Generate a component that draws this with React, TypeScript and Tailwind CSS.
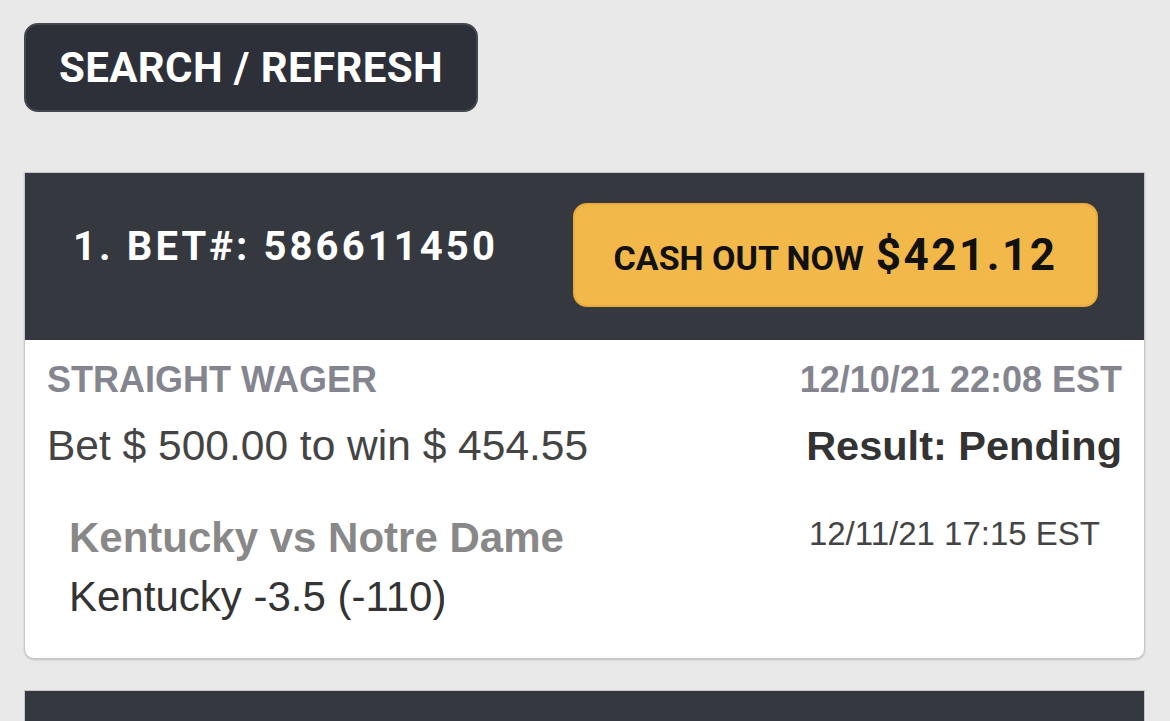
import React from 'react';

const head = "font-['Roboto',_'Liberation_Sans',_sans-serif] font-bold uppercase";
const body = "font-['Liberation_Sans',_Arial,_sans-serif]";

const BetCard: React.FC<{ index: number; bet: string; cashOut: string }> = ({ index, bet, cashOut }) => (
  <div className="ml-[24px] w-[1121px] border border-[#c6c6c6] rounded-b-[10px] shadow-[0_1px_2px_rgba(0,0,0,0.18)] bg-white overflow-hidden">
    <div className="h-[167px] bg-[#363840] flex items-center justify-between pl-[48px] pr-[46px]">
      <h3 className={`${head} text-white text-[40px] leading-none tracking-[3.1px] -mt-[20px]`}>
        {index}. Bet#: {bet}
      </h3>
      <button className="w-[525px] h-[104px] -mt-[3px] rounded-[14px] bg-[#f2b84a] border-2 border-[#eaab3d] flex items-center justify-center gap-[12px] text-[#111]">
        <span className={`${head} text-[34px] leading-none mt-[6px]`}>Cash out now</span>
        <span className={`${head} text-[44px] leading-none tracking-[2.5px]`}>${cashOut}</span>
      </button>
    </div>
    <div className={`${body} pt-[20px] pb-[37px] pl-[22px] pr-[22px]`}>
      <div className="flex justify-between items-start text-[36px] leading-[40px] font-bold text-[#85858f]">
        <span>STRAIGHT WAGER</span>
        <span>12/10/21 22:08 EST</span>
      </div>
      <div className="flex justify-between items-start mt-[22px] leading-[48px]">
        <span className="text-[42.5px] text-[#444]">Bet $ 500.00 to win $ 454.55</span>
        <span className="text-[41.5px] font-bold text-[#333]">Result: Pending</span>
      </div>
      <div className="mt-[44px] px-[22px] flex justify-between items-start">
        <div className="flex flex-col gap-[11px]">
          <span className="text-[42px] leading-[48px] font-bold text-[#888]">Kentucky vs Notre Dame</span>
          <span className="text-[42px] leading-[48px] text-[#333]">Kentucky -3.5 (-110)</span>
        </div>
        <span className="text-[33px] leading-[38px] text-[#444] mt-[1px]">12/11/21 17:15 EST</span>
      </div>
    </div>
  </div>
);

export default function App() {
  return (
    <div className="min-h-screen bg-[#e9e9e9] pt-[23px]">
      <button className={`${head} ml-[24px] w-[454px] h-[89px] rounded-[14px] bg-[#2e3039] border-2 border-[#45474f] text-white text-[42px] leading-none tracking-[0.4px] flex items-center justify-center`}>
        Search / Refresh
      </button>
      <div className="mt-[60px] flex flex-col gap-[31px]">
        <BetCard index={1} bet="586611450" cashOut="421.12" />
        <div className="ml-[24px] w-[1121px] h-[167px] bg-[#363840] border border-[#c6c6c6]" />
      </div>
    </div>
  );
}
